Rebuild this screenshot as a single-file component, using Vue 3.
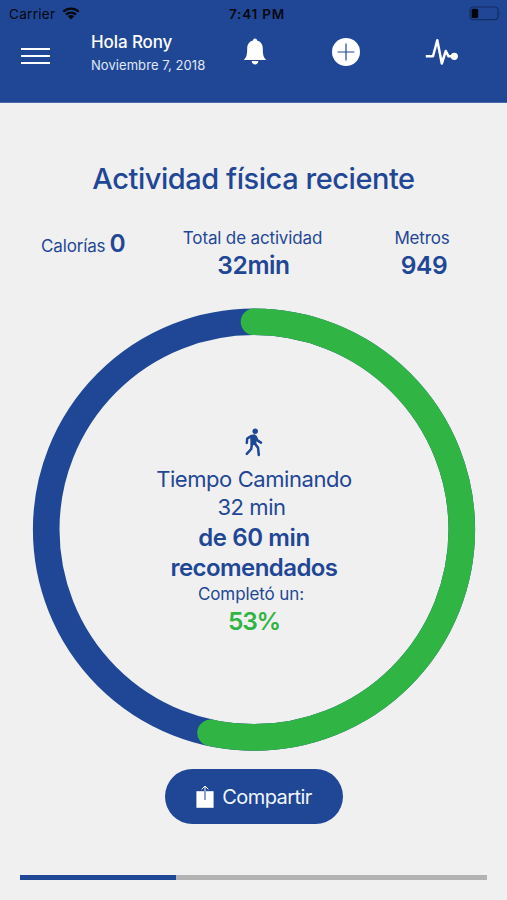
<script setup>
import { ref, computed } from 'vue'

const stats = ref({ calorias: 0, total: '32min', metros: 949 })
const minutos = ref(32)
const meta = ref(60)

//Anillo de progreso
const radio = 207.8
const largo = 2 * Math.PI * radio
const avance = computed(() => largo * minutos.value / meta.value)
const porcentaje = computed(() => Math.floor(minutos.value / meta.value * 100))

//Avance de la barra inferior
const barra = ref(33.4)
</script>

<template>
  <div class="screen">
    <header class="header">
      <div class="status">
        <span class="carrier">Carrier</span>
        <svg class="wifi" width="18" height="13" viewBox="0 0 18 13">
          <path d="M1.3 4.7A11 11 0 0 1 16.7 4.7M4 7.6A7.2 7.2 0 0 1 14 7.6" fill="none" stroke="#06080f" stroke-width="2.3" />
          <path d="M5.9 9.3A4.4 4.4 0 0 1 12.1 9.3L9 12.5Z" fill="#06080f" />
        </svg>
        <span class="clock">7:41 PM</span>
        <svg class="battery" width="33" height="15" viewBox="0 0 33 15">
          <rect x="1" y="1" width="28" height="12.6" rx="3" fill="none" stroke="#152c63" stroke-width="1.2" />
          <rect x="2.6" y="2.8" width="6.6" height="9.2" rx="1.5" fill="#03050b" />
          <path d="M30.6 5Q32.4 7.3 30.6 9.6Z" fill="#152c63" />
        </svg>
      </div>
      <nav class="nav">
        <button class="menu"><span></span><span></span><span></span></button>
        <div class="user">
          <p class="hello">Hola Rony</p>
          <p class="date">Noviembre 7, 2018</p>
        </div>
        <button class="bell">
          <svg width="24" height="27" viewBox="0 0 24 27">
            <path d="M12 0.5C13.2 0.5 14 1.3 14 2.4C18 3.4 19.8 6.4 19.8 10.5C19.8 16.8 20.5 19.4 23.3 22H0.7C3.5 19.4 4.2 16.8 4.2 10.5C4.2 6.4 6 3.4 10 2.4C10 1.3 10.8 0.5 12 0.5Z" fill="#fff" />
            <path d="M8.6 23H15.4C15.1 25.3 13.8 26.5 12 26.5S8.9 25.3 8.6 23Z" fill="#fff" />
          </svg>
        </button>
        <button class="add">
          <svg width="28" height="28" viewBox="0 0 28 28">
            <circle cx="14" cy="14" r="14" fill="#fff" />
            <path d="M14 5.6V22.4M5.6 14H22.4" stroke="#1f4796" stroke-width="1.2" />
          </svg>
        </button>
        <button class="pulse">
          <svg width="34" height="30" viewBox="0 0 34 30">
            <path d="M0.8 19.3H8L12.3 3.2L16.8 26.5L20.8 14L23.6 19.3H29" fill="none" stroke="#fff" stroke-width="2.5" stroke-linejoin="round" />
            <circle cx="29.3" cy="19.3" r="3.6" fill="#fff" />
          </svg>
        </button>
      </nav>
    </header>

    <main class="content">
      <h1 class="title">Actividad física reciente</h1>

      <section class="stats">
        <div class="stat inline">
          <span class="label">Calorías</span>
          <span class="value">{{ stats.calorias }}</span>
        </div>
        <div class="stat total">
          <span class="label">Total de actividad</span>
          <span class="value">{{ stats.total }}</span>
        </div>
        <div class="stat metros">
          <span class="label">Metros</span>
          <span class="value">{{ stats.metros }}</span>
        </div>
      </section>

      <section class="ring">
        <svg class="circle" width="444" height="444" viewBox="0 0 444 444">
          <circle cx="222" cy="221.6" :r="radio" fill="none" stroke="#1f4796" stroke-width="26.6" />
          <circle cx="222" cy="221.6" :r="radio" fill="none" stroke="#30b544" stroke-width="26.6" stroke-linecap="round"
            :stroke-dasharray="`${avance} ${largo}`" transform="rotate(-90 222 221.6)" />
        </svg>
        <div class="info">
          <svg class="walk" width="20" height="29" viewBox="0 0 20 29">
            <circle cx="11.2" cy="3.3" r="2.7" fill="#1f4796" />
            <path d="M7 7.8L10.4 7.2L12 8.8L11.4 16L7.4 16.4Z" fill="#1f4796" stroke="#1f4796" stroke-width="1.8" stroke-linejoin="round" />
            <path d="M7.2 8L3.2 10.6L2.8 15M11.8 8.8L13.4 12.4L17 14.6M10.6 15.4L14 19.6L14.8 27M8 15.6L7.2 21L2.8 25.8" fill="none" stroke="#1f4796" stroke-width="2.5" stroke-linecap="round" stroke-linejoin="round" />
          </svg>
          <p class="activity">Tiempo Caminando</p>
          <p class="minutes">{{ minutos }} min</p>
          <p class="goal">de {{ meta }} min</p>
          <p class="goal recommended">recomendados</p>
          <p class="done">Completó un:</p>
          <p class="percent">{{ porcentaje }}%</p>
        </div>
      </section>

      <button class="share">
        <svg width="18" height="24" viewBox="0 0 18 24">
          <rect x="0.4" y="6.2" width="17.2" height="16.6" fill="#fff" />
          <path d="M9 6.2V1.2M5.6 4.4L9 1L12.4 4.4" fill="none" stroke="#fff" stroke-width="1" />
          <path d="M9 6.2V15" stroke="#1f4796" stroke-width="1" />
        </svg>
        <span>Compartir</span>
      </button>

      <div class="bar">
        <div class="bar_fill" :style="{ width: barra + '%' }"></div>
      </div>
    </main>
  </div>
</template>

<style>
body{
  margin: 0;
  background: #f0f0f0;
}
</style>

<style scoped>
.screen{
  display: flex;
  flex-direction: column;
  width: 507px;
  height: 900px;
  overflow: hidden;
  background: #f0f0f0;
  color: #1f4796;
  font-family: Inter, "Liberation Sans", sans-serif;
}
p,h1{
  margin: 0;
  white-space: nowrap;
}
button{
  display: flex;
  padding: 0;
  border: none;
  background: none;
  font-family: inherit;
}
svg{
  display: block;
  flex: none;
}

.header{
  height: 103px;
  background: #1f4796;
  border-bottom: 1px solid #4a69a9;
  box-sizing: border-box;
  flex: none;
}
.status{
  display: grid;
  grid-template-columns: 53px 167px 1fr 33px;
  align-items: center;
  height: 27px;
  padding: 0 5px 0 9px;
  font-size: 13.5px;
  color: #06080f;
  box-sizing: border-box;
}
.carrier{
  letter-spacing: 0.3px;
}
.clock{
  font-weight: 600;
  letter-spacing: 0.85px;
}
.status .clock{
  letter-spacing: 0.8px;
}
.nav{
  display: flex;
  align-items: flex-start;
  padding-left: 21px;
}
.menu{
  flex-direction: column;
  gap: 5px;
  width: 29px;
  margin-top: 20.5px;
}
.menu span{
  width: 29px;
  height: 2px;
  background: #fff;
}
.user{
  width: 151.8px;
  margin-left: 41px;
  color: #fff;
}
.hello{
  margin-top: 4px;
  font-size: 17px;
  font-weight: 500;
  line-height: 22px;
  letter-spacing: -0.1px;
}
.date{
  font-size: 13px;
  line-height: 24px;
  letter-spacing: 0.06px;
  color: #e1e8f6;
}
.bell{
  margin-top: 11px;
}
.add{
  margin: 11px 0 0 65.2px;
}
.pulse{
  margin: 10px 0 0 65px;
}

.content{
  display: flex;
  flex-direction: column;
  flex: 1;
}
.title{
  margin-top: 58px;
  font-size: 29px;
  font-weight: 500;
  line-height: 36px;
  letter-spacing: -0.45px;
  text-align: center;
}
.stats{
  display: flex;
  align-items: flex-start;
  height: 57px;
  margin-top: 28px;
  margin-bottom: 26px;
}
.stat{
  display: flex;
  flex-direction: column;
  align-items: center;
  white-space: nowrap;
}
.stat.inline{
  flex-direction: row;
  align-items: baseline;
  gap: 4px;
  width: 125px;
  padding: 5px 0 0 41px;
  box-sizing: border-box;
}
.stat.total{
  width: 255px;
}
.stat.metros{
  width: 84px;
}
.label{
  font-size: 17px;
  line-height: 27px;
  letter-spacing: -0.15px;
}
.value{
  font-size: 24.5px;
  font-weight: 600;
  line-height: 27px;
  letter-spacing: -0.4px;
}
.total .value{
  padding-left: 2px;
}
.metros .value{
  padding-left: 4px;
}

.ring{
  display: grid;
  width: 444px;
  height: 444px;
  margin-left: 32px;
  flex: none;
}
.circle,.info{
  grid-area: 1 / 1;
}
.info{
  display: flex;
  flex-direction: column;
  align-items: center;
  padding-top: 120px;
}
.activity,.minutes{
  font-size: 22px;
  line-height: 28px;
  letter-spacing: -0.43px;
}
.activity{
  margin-top: 8px;
}
.minutes{
  margin-right: 5px;
}
.goal{
  margin-top: 2px;
  font-size: 24px;
  font-weight: 600;
  line-height: 30px;
  letter-spacing: -0.4px;
}
.recommended{
  margin-top: 0;
  letter-spacing: -0.58px;
}
.done{
  margin-right: 6px;
  font-size: 17px;
  line-height: 22px;
  letter-spacing: -0.1px;
}
.percent{
  font-size: 24.5px;
  font-weight: 600;
  line-height: 32px;
  letter-spacing: -1.2px;
  color: #30b544;
}

.share{
  align-items: center;
  justify-content: center;
  gap: 8px;
  width: 178px;
  height: 55px;
  margin: 17px 0 0 165px;
  border-radius: 28px;
  background: #1f4796;
  color: #f2f6ff;
  font-size: 20px;
  letter-spacing: -0.55px;
  flex: none;
}
.bar{
  width: 467px;
  height: 5px;
  margin: 51px 0 0 20px;
  background: #b3b3b3;
}
.bar_fill{
  height: 5px;
  background: #1f4796;
}
</style>
